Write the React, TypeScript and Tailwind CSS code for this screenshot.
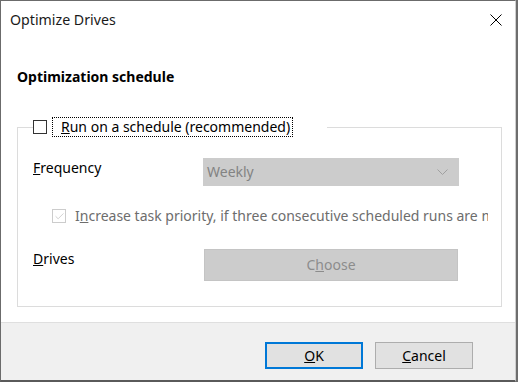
import { Check } from "lucide-react";

const font = { fontFamily: '"Noto Sans", "Open Sans", sans-serif' };

const CloseIcon = () => (
  <svg width="12" height="12" viewBox="0 0 12 12" className="block">
    <path d="M0.5 0.5 L11.5 11.5 M11.5 0.5 L0.5 11.5" stroke="#000" strokeWidth="1" fill="none" />
  </svg>
);

const Chevron = () => (
  <svg width="11" height="6" viewBox="0 0 11 6" className="block">
    <path d="M0.5 0.5 L5.5 5.5 L10.5 0.5" stroke="#a0a0a0" strokeWidth="1" fill="none" />
  </svg>
);

export default function App() {
  return (
    <div className="w-[518px] h-[382px] bg-[#6e6e6e] flex" style={font}>
      <div className="w-[516px] h-[382px] flex flex-col bg-white border-l border-t border-[#6b6b6b] border-b-2 border-b-[#5a5a5a] border-r border-r-[#cfcfcf]">
        {/* title bar */}
        <div className="h-[39px] shrink-0 flex items-center justify-between pl-[9px] pr-[13px]">
          <span className="text-[14.2px] leading-5 text-[#1a1a1a] -mt-[1px]">Optimize Drives</span>
          <div className="-mt-[2px]">
            <CloseIcon />
          </div>
        </div>

        {/* content */}
        <div className="flex-1 flex flex-col">
          <h2 className="mt-[27px] ml-[16px] text-[14px] leading-5 font-bold text-[#000]">
            Optimization schedule
          </h2>

          <fieldset className="mt-[30px] ml-[16px] w-[485px] border border-[#dcdcdc] pl-[15px] pb-[25px]">
            <legend className="pr-[34px] h-[20px] flex items-center">
              <span className="w-[14px] h-[14px] border border-[#333] bg-white shrink-0" />
              <span className="ml-[5px] h-[20px] flex items-center pl-[8px] pr-[2px] border border-dotted border-black text-[14px] leading-5 text-[#000] whitespace-nowrap">
                <span>
                  <u>R</u>un on a schedule (recommended)
                </span>
              </span>
            </legend>

            <div className="mt-[21px] flex items-start">
              <span className="w-[170px] text-[14px] leading-5 text-[#000]">
                <u>F</u>requency
              </span>
              <div className="w-[256px] h-[28px] bg-[#cccccc] flex items-center justify-between pl-[4px] pr-[11px]">
                <span className="text-[14px] leading-5 text-[#838383]">Weekly</span>
                <Chevron />
              </div>
            </div>

            <div className="mt-[20px] h-[20px] w-[455px] flex items-center overflow-hidden whitespace-nowrap">
              <span className="ml-[19px] w-[14px] h-[14px] border border-[#cccccc] bg-white flex items-center justify-center shrink-0">
                <Check className="w-[11px] h-[11px] text-[#bcbcbc]" strokeWidth={1.5} />
              </span>
              <span className="ml-[9px] text-[14px] leading-5 text-[#6d6d6d]">
                I<u>n</u>crease task priority, if three consecutive scheduled runs are missed
              </span>
            </div>

            <div className="mt-[23px] flex items-start">
              <span className="w-[171px] text-[14px] leading-5 text-[#000]">
                <u>D</u>rives
              </span>
              <div className="w-[254px] h-[32px] bg-[#cccccc] border border-[#c4c4c4] flex items-center justify-center">
                <span className="text-[14px] leading-5 text-[#8c8c8c]">
                  C<u>h</u>oose
                </span>
              </div>
            </div>
          </fieldset>

          <div className="flex-1" />

          {/* footer */}
          <div className="h-[58px] shrink-0 bg-[#f0f0f0] border-t border-[#dfdfdf] flex justify-end items-start pt-[19px] pr-[42px] gap-[12px]">
            <button className="w-[98px] h-[27px] bg-[#e1e1e1] border-2 border-[#0078d7] text-[14px] leading-5 text-[#000]">
              <u>O</u>K
            </button>
            <button className="w-[98px] h-[27px] bg-[#e1e1e1] border border-[#adadad] text-[14px] leading-5 text-[#000]">
              <u>C</u>ancel
            </button>
          </div>
        </div>
      </div>
    </div>
  );
}
